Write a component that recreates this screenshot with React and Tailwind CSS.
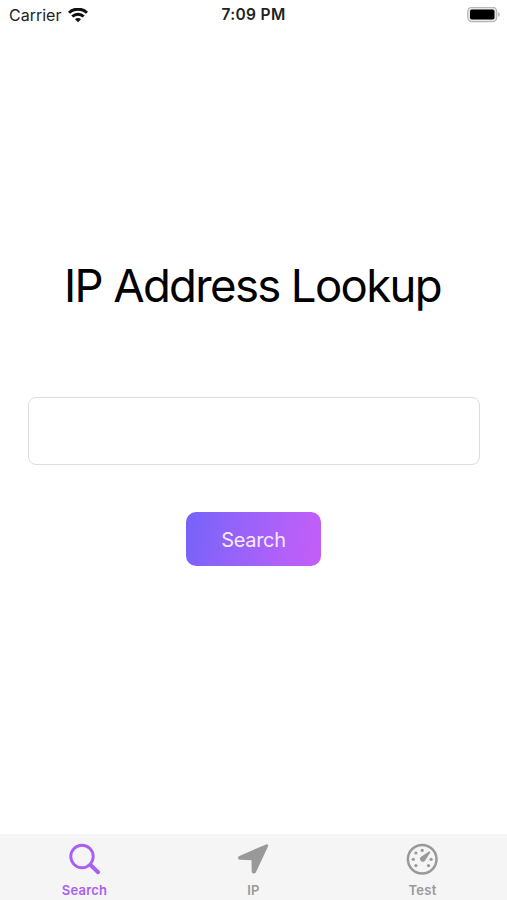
import { useState } from "react";

const tabs = [
  { id: "search", label: "Search", Icon: SearchIcon },
  { id: "ip", label: "IP", Icon: ArrowIcon },
  { id: "test", label: "Test", Icon: GaugeIcon },
];

function WifiIcon() {
  return (
    <svg width="20" height="15" viewBox="0 0 20 15" fill="none" stroke="#111" strokeWidth="3">
      <path d="M1 4.8C6-.1 14-.1 19 4.8" />
      <path d="M4.3 8.5c3.2-3.1 8.2-3.1 11.4 0" />
      <path d="M10 14.2 7 11.2c1.7-1.5 4.3-1.5 6 0z" fill="#111" stroke="none" />
    </svg>
  );
}

function BatteryIcon() {
  return (
    <svg width="34" height="16" viewBox="0 0 34 16">
      <rect x="0.75" y="0.25" width="29" height="14.5" rx="4" fill="#e6e6e6" stroke="#a9a9a9" />
      <rect x="3" y="2.5" width="24.5" height="10" rx="1.8" fill="#000" />
      <path d="M31.3 5.3c1.9.5 1.9 3.9 0 4.4z" fill="#a9a9a9" />
    </svg>
  );
}

function SearchIcon() {
  return (
    <svg width="34" height="34" viewBox="0 0 34 34" fill="none" stroke="currentColor" strokeLinecap="round">
      <circle cx="14" cy="13.5" r="11.2" strokeWidth="2.9" />
      <path d="m22.3 21.8 7.8 7.4" strokeWidth="4" />
    </svg>
  );
}

function ArrowIcon() {
  return (
    <svg width="34" height="34" viewBox="0 0 34 34" fill="currentColor" stroke="currentColor" strokeWidth="2" strokeLinejoin="round">
      <path d="M29.4 2.3 2.8 13.8c-1.3.6-.9 2 .4 2l12.3.4.2 12.2c.1 1.4 1.7 1.6 2.3.4L30.1 3.1c.2-.5-.2-1-.7-.8z" />
    </svg>
  );
}

function GaugeIcon() {
  return (
    <svg width="34" height="34" viewBox="0 0 34 34" fill="currentColor">
      <circle cx="16.2" cy="16.3" r="14.3" fill="none" stroke="currentColor" strokeWidth="2.5" />
      <circle cx="7.3" cy="16.3" r="1.6" />
      <circle cx="9.9" cy="10" r="1.6" />
      <circle cx="16.2" cy="7.4" r="1.6" />
      <circle cx="25.1" cy="16.3" r="1.6" />
      <circle cx="9.9" cy="22.6" r="1.6" />
      <circle cx="22.5" cy="22.6" r="1.6" />
      <path d="M23.9 8.8c.5.4.4.9.1 1.3l-5.2 7.8c-2 2.8-6.6-1.2-4.1-3.9l7.9-5.2c.4-.3.9-.4 1.3 0z" />
    </svg>
  );
}

export default function App() {
  const [active, setActive] = useState("search");
  const [address, setAddress] = useState("");

  return (
    <div className="flex h-screen w-full flex-col bg-white font-['Inter',sans-serif] text-black">
      {/* Status bar */}
      <header className="grid h-[30px] shrink-0 grid-cols-3 items-center pr-[6px] pl-[9px] text-[#222]">
        <div className="flex items-center gap-[7px]">
          <span className="text-[16px] leading-none">Carrier</span>
          <WifiIcon />
        </div>
        <span className="pr-[3px] text-center text-[15.5px] leading-none font-semibold tracking-[0.35px]">7:09 PM</span>
        <div className="flex justify-end">
          <BatteryIcon />
        </div>
      </header>

      {/* Lookup form */}
      <main className="flex flex-1 flex-col items-center pr-[27px] pl-7 pt-[228px]">
        <h1 className="mr-[3px] text-[45.5px] leading-[56px] tracking-[-1.65px] whitespace-nowrap">IP Address Lookup</h1>
        <input
          type="text"
          value={address}
          onChange={(e) => setAddress(e.target.value)}
          className="mt-[83px] h-[68px] w-full rounded-lg border border-[#dedede] bg-white px-4 text-xl outline-none"
        />
        <button
          type="button"
          className="mt-[47px] mr-px h-[54px] w-[135px] rounded-[10px] bg-linear-100 from-[#7563fa] to-[#c65df8] pt-px text-[20px] tracking-[-0.3px] text-[#f6e9ff]"
        >
          Search
        </button>
      </main>

      {/* Bottom tabs */}
      <nav className="grid h-[66px] shrink-0 grid-cols-3 bg-[#f5f5f5]">
        {tabs.map(({ id, label, Icon }) => (
          <button
            key={id}
            type="button"
            onClick={() => setActive(id)}
            className={`flex flex-col items-center pt-[9px] ${active === id ? "text-[#a960f2]" : "text-[#999]"}`}
          >
            <Icon />
            <span className="mt-[5px] text-[13px] leading-4 font-semibold tracking-[0.25px]">{label}</span>
          </button>
        ))}
      </nav>
    </div>
  );
}
